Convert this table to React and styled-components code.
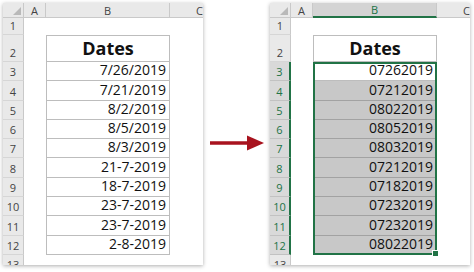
import React from "react";
import styled, { createGlobalStyle, css } from "styled-components";

const GlobalStyle = createGlobalStyle`
  body {
    margin: 0;
    background: #fff;
    font-family: "Open Sans", "Liberation Sans", sans-serif;
  }
`;

const GREEN = "#217346";

const Page = styled.div`
  display: flex;
  align-items: flex-start;
  width: 474px;
  height: 272px;
  padding: 3px 0 0 3px;
  box-sizing: border-box;
`;

const Sheet = styled.div`
  position: relative;
  display: grid;
  grid-template-columns: 21px 22px 124px 60px;
  grid-template-rows: 15px 17px 27px repeat(11, 19.3px);
  width: 200px;
  height: 262px;
  flex-shrink: 0;
  overflow: hidden;
  background: #fff;
  box-shadow: 0 1px 4px rgba(0, 0, 0, 0.32);
`;

const Corner = styled.div`
  position: relative;
  background: #e9e9e9;
  border-right: 1px solid #c9c9c9;
  border-bottom: 1px solid #c9c9c9;

  &::after {
    content: "";
    position: absolute;
    right: 2px;
    bottom: 2px;
    border-left: 8px solid transparent;
    border-bottom: 8px solid #b9b9b9;
  }
`;

const ColHead = styled.div`
  display: flex;
  align-items: center;
  justify-content: center;
  font-size: 11px;
  color: #444;
  background: #e9e9e9;
  border-right: 1px solid #c9c9c9;
  border-bottom: 1px solid #c9c9c9;

  ${({ $selected }) =>
    $selected &&
    css`
      background: #d4d4d4;
      color: ${GREEN};
      border-bottom: 2px solid ${GREEN};
    `}
`;

const RowHead = styled.div`
  display: flex;
  align-items: flex-end;
  justify-content: center;
  padding-bottom: 1px;
  font-size: 11px;
  line-height: 15px;
  color: #444;
  background: #e9e9e9;
  border-right: 1px solid #c9c9c9;
  border-bottom: 1px solid #d6d6d6;
  box-sizing: border-box;

  ${({ $selected }) =>
    $selected &&
    css`
      background: #d9d9d9;
      color: ${GREEN};
      border-right: 2px solid ${GREEN};
      border-bottom-color: #c2c2c2;
    `}
`;

const Blank = styled.div`
  background: #fff;
`;

const Cell = styled.div`
  display: flex;
  align-items: flex-end;
  justify-content: flex-end;
  padding: 0 3px 1px 0;
  font-size: 14px;
  line-height: 18px;
  color: #111;
  background: #fff;
  border: 1px solid #bdbdbd;
  border-top: none;
  box-sizing: border-box;

  ${({ $title }) =>
    $title &&
    css`
      justify-content: center;
      padding: 0 0 2px;
      font-size: 18px;
      font-weight: 700;
      line-height: 22px;
      border-top: 1px solid #bdbdbd;
    `}

  ${({ $filled }) =>
    $filled &&
    css`
      background: #c8c8c8;
      border-bottom-color: #a2a2a2;
    `}
`;

/* absolutely positioned grid child: the grid area B3:B12 is its box */
const Selection = styled.div`
  position: absolute;
  inset: 0;
  grid-column: 3 / 4;
  grid-row: 4 / 14;
  border: 2px solid ${GREEN};
  box-sizing: border-box;
  pointer-events: none;
  z-index: 1;
`;

const FillHandle = styled.span`
  position: absolute;
  right: -4px;
  bottom: -4px;
  width: 5px;
  height: 5px;
  background: ${GREEN};
  border: 1px solid #fff;
`;

const ArrowBox = styled.div`
  width: 67px;
  padding: 130px 0 0 7px;
  box-sizing: border-box;
  flex-shrink: 0;
`;

const Arrow = () => (
  <svg width="54" height="20" viewBox="0 0 54 20">
    <line x1="0" y1="10" x2="40" y2="10" stroke="#a8121e" strokeWidth="3.5" />
    <polygon points="37,2.5 54,10 37,17.5" fill="#a8121e" />
  </svg>
);

const before = [
  "7/26/2019",
  "7/21/2019",
  "8/2/2019",
  "8/5/2019",
  "8/3/2019",
  "21-7-2019",
  "18-7-2019",
  "23-7-2019",
  "23-7-2019",
  "2-8-2019",
];

const after = [
  "07262019",
  "07212019",
  "08022019",
  "08052019",
  "08032019",
  "07212019",
  "07182019",
  "07232019",
  "07232019",
  "08022019",
];

const Worksheet = ({ values, selected }) => {
  const rows = [];
  for (let r = 1; r <= 13; r++) {
    const inData = r >= 3 && r <= 12;
    let b;
    if (r === 2) b = <Cell $title>Dates</Cell>;
    else if (inData)
      b = <Cell $filled={selected && r > 3}>{values[r - 3]}</Cell>;
    else b = <Blank />;

    rows.push(
      <React.Fragment key={r}>
        <RowHead $selected={selected && inData}>{r}</RowHead>
        <Blank />
        {b}
        <Blank />
      </React.Fragment>
    );
  }

  return (
    <Sheet>
      <Corner />
      <ColHead>A</ColHead>
      <ColHead $selected={selected}>B</ColHead>
      <ColHead>C</ColHead>
      {rows}
      {selected && (
        <Selection>
          <FillHandle />
        </Selection>
      )}
    </Sheet>
  );
};

export default function App() {
  return (
    <>
      <GlobalStyle />
      <Page>
        <Worksheet values={before} />
        <ArrowBox>
          <Arrow />
        </ArrowBox>
        <Worksheet values={after} selected />
      </Page>
    </>
  );
}
